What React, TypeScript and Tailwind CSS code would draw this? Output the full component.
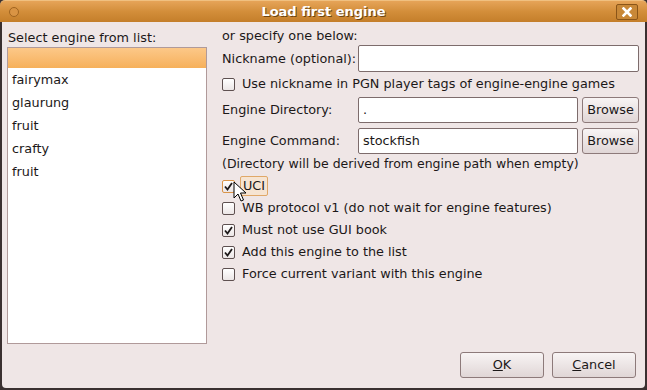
import type { ReactNode } from 'react'

const engines = ['', 'fairymax', 'glaurung', 'fruit', 'crafty', 'fruit']

function Check({ on, hot }: { on?: boolean; hot?: boolean }) {
  return (
    <span
      className={`flex h-[13px] w-[13px] shrink-0 items-center justify-center rounded-[2px] border bg-gradient-to-b from-white to-[#ece6e6] ${
        hot ? 'border-[#d9954a]' : 'border-[#5e5050]'
      }`}
    >
      {on && (
        <svg width="11" height="11" viewBox="0 0 11 11">
          <path d="M2 5.5 L4.5 8.5 L9 2" fill="none" stroke="#1e1a1a" strokeWidth="1.8" />
        </svg>
      )}
    </span>
  )
}

function CheckRow({ on, hot, children }: { on?: boolean; hot?: boolean; children: ReactNode }) {
  return (
    <div className="flex h-[22px] items-center">
      <Check on={on} hot={hot} />
      <span className="ml-[7px]">{children}</span>
    </div>
  )
}

function Button({ children, w }: { children: ReactNode; w: string }) {
  return (
    <div
      className={`flex h-[26px] ${w} items-center justify-center rounded-[3px] border border-[#8d7a7a] bg-gradient-to-b from-[#f8f4f4] to-[#e0d6d6]`}
    >
      {children}
    </div>
  )
}

function Field({ label, value, browse }: { label: string; value?: string; browse?: boolean }) {
  return (
    <div className="flex items-center">
      <span className="w-[136px] shrink-0">{label}</span>
      <div
        className={`flex h-[26px] items-center rounded-[2px] border border-[#7d6c6c] bg-white px-[4px] ${
          browse ? 'w-[221px]' : 'w-[282px]'
        }`}
      >
        {value}
      </div>
      {browse && (
        <div className="ml-[4px]">
          <Button w="w-[57px]">Browse</Button>
        </div>
      )}
    </div>
  )
}

export default function App() {
  return (
    <div
      className="relative flex h-[390px] w-[647px] flex-col overflow-hidden bg-[#3a3030] text-[12.8px] text-[#1c1818]"
      style={{ fontFamily: '"DejaVu Sans", sans-serif' }}
    >
      <header className="relative flex h-[22px] shrink-0 items-center justify-center rounded-t-[5px] border-t border-[#f0c080] bg-gradient-to-b from-[#e6a458] via-[#d38e3a] to-[#c47e2a]">
        <span className="absolute left-[9px] top-[6px] h-[10px] w-[10px] rounded-full border border-[#a06420] bg-[#d99444]" />
        <span className="text-[13px] font-bold text-white [text-shadow:1px_1px_0_#6e4410]">
          Load first engine
        </span>
        <span className="absolute right-[9px] top-[3px] flex h-[16px] w-[22px] items-center justify-center rounded-[2px] border border-[#8a5518] bg-[#c88838]">
          <svg width="10" height="10" viewBox="0 0 10 10">
            <path d="M1.5 1.5 L8.5 8.5 M8.5 1.5 L1.5 8.5" stroke="#fff" strokeWidth="2.6" strokeLinecap="square" />
          </svg>
        </span>
      </header>

      <div className="mx-[2px] mb-[2px] flex flex-1 flex-col rounded-b-[4px] bg-[#efe6e6]">
        <div className="flex flex-1">
          <div className="ml-[5px] flex w-[200px] flex-col">
            <div className="flex h-[25px] items-end pl-[1px]">Select engine from list:</div>
            <div className="h-[297px] border border-[#b09a9a] bg-white">
              {engines.map((e, i) => (
                <div
                  key={i}
                  className={`flex items-center px-[4px] ${
                    i === 0 ? 'h-[20px] bg-gradient-to-b from-[#fcc888] to-[#f6b05a]' : 'h-[23px]'
                  }`}
                >
                  {e}
                </div>
              ))}
            </div>
          </div>

          <div className="ml-[15px] flex w-[417px] flex-col">
            <div className="flex h-[23px] items-end">or specify one below:</div>
            <div className="flex items-center">
              <span className="w-[136px] shrink-0">Nickname (optional):</span>
              <div className="h-[27px] w-[281px] rounded-[2px] border border-[#7d6c6c] bg-white" />
            </div>
            <div className="flex h-[24px] items-center">
              <Check />
              <span className="ml-[7px]">Use nickname in PGN player tags of engine-engine games</span>
            </div>
            <div className="mt-[1px]">
              <Field label="Engine Directory:" value="." browse />
            </div>
            <div className="mt-[5px]">
              <Field label="Engine Command:" value="stockfish" browse />
            </div>
            <div className="flex h-[21px] items-center text-[12.5px]">
              (Directory will be derived from engine path when empty)
            </div>
            <div className="flex h-[22px] items-center">
              <Check on hot />
              <span className="ml-[5px] rounded-[2px] border border-[#e0a868] bg-[#f6e4d2] px-[2px] leading-[18px]">
                UCI
              </span>
            </div>
            <CheckRow>WB protocol v1 (do not wait for engine features)</CheckRow>
            <CheckRow on>Must not use GUI book</CheckRow>
            <CheckRow on>Add this engine to the list</CheckRow>
            <CheckRow>Force current variant with this engine</CheckRow>
          </div>
        </div>

        <div className="flex h-[38px] items-start justify-end gap-[8px] pr-[9px] pt-[2px]">
          <Button w="w-[84px]">
            <span>
              <span className="underline">O</span>K
            </span>
          </Button>
          <Button w="w-[84px]">
            <span>
              <span className="underline">C</span>ancel
            </span>
          </Button>
        </div>
      </div>

      <svg className="absolute left-[233px] top-[181px]" width="14" height="22" viewBox="0 0 14 22">
        <path d="M1 1 L1 17 L5 13 L8 20 L10.5 19 L7.5 12 L13 12 Z" fill="#fff" stroke="#000" strokeWidth="1" strokeLinejoin="round" />
      </svg>
    </div>
  )
}
